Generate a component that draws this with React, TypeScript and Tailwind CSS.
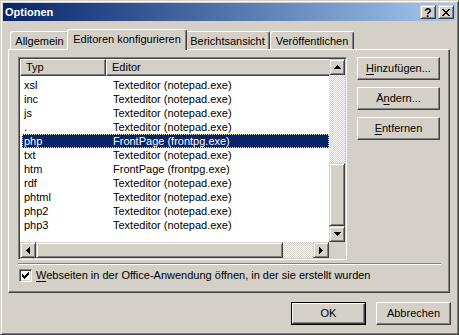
import React from "react";

function Px({ pts, color = "#000" }: { pts: string[]; color?: string }) {
  const rects: React.ReactElement[] = [];
  pts.forEach((row, y) =>
    row.split("").forEach((c, x) => {
      if (c === "#")
        rects.push(<rect key={`${x}-${y}`} x={x} y={y} width={1} height={1} fill={color} />);
    })
  );
  return (
    <svg width={pts[0].length} height={pts.length} shapeRendering="crispEdges" className="block">
      {rects}
    </svg>
  );
}

const UP = ["...#...", "..###..", ".#####.", "#######"];
const DOWN = ["#######", ".#####.", "..###..", "...#..."];
const LEFT = ["...#", "..##", ".###", "####", ".###", "..##", "...#"];
const RIGHT = ["#...", "##..", "###.", "####", "###.", "##..", "#..."];
const CLOSE = ["##....##", ".##..##.", "..####..", "...##...", "..####..", ".##..##.", "##....##"];
const CHECK = ["......#", ".....##", "#...###", "##.###.", "#####..", ".###...", "..#...."];

function ScrollBtn({ arrow }: { arrow: string[] }) {
  return (
    <div className="w-[16px] h-[16px] shrink-0 flex items-center justify-center bg-[#d4d0c8] border border-t-[#d4d0c8] border-l-[#d4d0c8] border-r-[#404040] border-b-[#404040] shadow-[inset_1px_1px_0_#fff,inset_-1px_-1px_0_#808080]">
      {arrow && <Px pts={arrow} />}
    </div>
  );
}

function Thumb({ className }: { className: string }) {
  return (
    <div
      className={
        "shrink-0 bg-[#d4d0c8] border border-t-[#d4d0c8] border-l-[#d4d0c8] border-r-[#404040] border-b-[#404040] shadow-[inset_1px_1px_0_#fff,inset_-1px_-1px_0_#808080] " +
        className
      }
    />
  );
}

function Track({ className }: { className: string }) {
  return (
    <div
      className={
        "shrink-0 bg-[repeating-conic-gradient(#d4d0c8_0%_25%,#ffffff_0%_50%)] bg-size-[2px_2px] " + className
      }
    />
  );
}

function Button({
  children,
  className = "",
  isDefault = false,
}: {
  children: React.ReactNode;
  className?: string;
  isDefault?: boolean;
}) {
  const inner = (
    <div className="w-full h-full flex items-center justify-center bg-[#d4d0c8] border border-t-white border-l-white border-r-[#404040] border-b-[#404040] shadow-[inset_-1px_-1px_0_#808080]">
      <span className="leading-none">{children}</span>
    </div>
  );
  if (isDefault) {
    return <div className={"border border-black " + className}>{inner}</div>;
  }
  return <div className={className}>{inner}</div>;
}

const TX = "Texteditor (notepad.exe)";
const FP = "FrontPage (frontpg.exe)";
const rows: [string, string][] = [
  ["xsl", TX],
  ["inc", TX],
  ["js", TX],
  [".", TX],
  ["php", FP],
  ["txt", TX],
  ["htm", FP],
  ["rdf", TX],
  ["phtml", TX],
  ["php2", TX],
  ["php3", TX],
];

function Tab({ label, w, selected = false }: { label: string; w: string; selected?: boolean }) {
  if (selected) {
    return (
      <div
        className={
          "relative z-10 -mx-[2px] -mb-[1px] h-[21px] flex justify-center pt-[4px] bg-[#d4d0c8] rounded-t-[3px] border-t border-l border-r border-t-white border-l-white border-r-[#404040] shadow-[inset_-1px_0_0_#808080] " +
          w
        }
      >
        <span className="leading-none">{label}</span>
      </div>
    );
  }
  return (
    <div
      className={
        "h-[18px] flex justify-center pt-[4px] bg-[#d4d0c8] rounded-t-[3px] border-t border-l border-r border-t-white border-l-white border-r-[#404040] shadow-[inset_-1px_0_0_#808080] " +
        w
      }
    >
      <span className="leading-none">{label}</span>
    </div>
  );
}

export default function App() {
  return (
    <div className="w-[459px] h-[335px] overflow-hidden bg-[#d4d0c8] text-black text-[11px] font-['Liberation_Sans',Arial,sans-serif] border border-t-[#d4d0c8] border-l-[#d4d0c8] border-r-[#404040] border-b-[#404040] shadow-[inset_1px_1px_0_#fff,inset_-1px_-1px_0_#808080] p-[2px] flex flex-col">
      {/* Title bar */}
      <div className="h-[18px] shrink-0 flex items-center pl-[2px] pr-[2px] bg-linear-to-r from-[#0a246a] to-[#a6caf0]">
        <span className="text-white font-bold leading-none">Optionen</span>
        <div className="ml-auto flex gap-[2px]">
          <div className="w-[16px] h-[14px] flex items-center justify-center bg-[#d4d0c8] border border-t-[#d4d0c8] border-l-[#d4d0c8] border-r-[#404040] border-b-[#404040] shadow-[inset_1px_1px_0_#fff,inset_-1px_-1px_0_#808080]">
            <span className="font-bold text-[12px] leading-none mt-[1px]">?</span>
          </div>
          <div className="w-[16px] h-[14px] flex items-center justify-center bg-[#d4d0c8] border border-t-[#d4d0c8] border-l-[#d4d0c8] border-r-[#404040] border-b-[#404040] shadow-[inset_1px_1px_0_#fff,inset_-1px_-1px_0_#808080]">
            <Px pts={CLOSE} />
          </div>
        </div>
      </div>

      {/* Tabs */}
      <div className="mt-[8px] h-[20px] pl-[7px] flex items-end">
        <Tab label="Allgemein" w="w-[59px]" />
        <Tab label="Editoren konfigurieren" w="w-[120px]" selected />
        <Tab label="Berichtsansicht" w="w-[85px]" />
        <Tab label="Veröffentlichen" w="w-[84px]" />
      </div>

      {/* Panel */}
      <div className="ml-[5px] w-[442px] h-[244px] shrink-0 border border-t-white border-l-white border-r-[#404040] border-b-[#404040] shadow-[inset_-1px_-1px_0_#808080] pl-[9px] pt-[7px] flex flex-col">
        <div className="flex">
          {/* List view */}
          <div className="w-[329px] h-[203px] shrink-0 border border-t-[#808080] border-l-[#808080] border-r-white border-b-white shadow-[inset_1px_1px_0_#404040,inset_-1px_-1px_0_#d4d0c8] p-[1px]">
            <div className="grid grid-cols-[309px_16px] grid-rows-[183px_16px]">
              <div className="bg-white overflow-hidden flex flex-col">
                <div className="h-[17px] shrink-0 flex">
                  <div className="w-[86px] shrink-0 flex items-center pl-[5px] bg-[#d4d0c8] border border-t-white border-l-white border-r-[#404040] border-b-[#404040] shadow-[inset_-1px_-1px_0_#808080]">
                    <span className="leading-none">Typ</span>
                  </div>
                  <div className="w-[240px] shrink-0 flex items-center pl-[5px] bg-[#d4d0c8] border border-t-white border-l-white border-r-[#404040] border-b-[#404040] shadow-[inset_-1px_-1px_0_#808080]">
                    <span className="leading-none">Editor</span>
                  </div>
                </div>
                <div className="pt-[2px] flex flex-col">
                  {rows.map(([t, e], i) => {
                    const sel = i === 4;
                    return (
                      <div
                        key={i}
                        className={
                          "h-[14px] ml-[2px] flex items-center " +
                          (sel
                            ? "bg-[#0a246a] text-white outline-1 outline-dotted outline-[#e8e2b0] -outline-offset-1"
                            : "")
                        }
                      >
                        <div className="w-[84px] shrink-0 pl-[2px] leading-none">{t}</div>
                        <div className="pl-[7px] leading-none whitespace-nowrap">{e}</div>
                      </div>
                    );
                  })}
                </div>
              </div>
              {/* vertical scrollbar */}
              <div className="flex flex-col">
                <ScrollBtn arrow={UP} />
                <Track className="h-[88px]" />
                <Thumb className="h-[63px]" />
                <ScrollBtn arrow={DOWN} />
              </div>
              {/* horizontal scrollbar */}
              <div className="flex">
                <ScrollBtn arrow={LEFT} />
                <Thumb className="w-[247px]" />
                <Track className="w-[30px]" />
                <ScrollBtn arrow={RIGHT} />
              </div>
              <div className="bg-[#d4d0c8]" />
            </div>
          </div>

          {/* Buttons */}
          <div className="ml-[10px] flex flex-col gap-[7px]">
            <Button className="w-[83px] h-[23px]">
              <span className="underline underline-offset-[2px]">H</span>inzufügen...
            </Button>
            <Button className="w-[83px] h-[23px]">
              Ä<span className="underline underline-offset-[2px]">n</span>dern...
            </Button>
            <Button className="w-[83px] h-[23px]">
              <span className="underline underline-offset-[2px]">E</span>ntfernen
            </Button>
          </div>
        </div>

        {/* separator */}
        <div className="mt-[3px] w-[423px] h-[2px] border-t border-t-[#808080] border-b border-b-white" />

        {/* checkbox */}
        <div className="mt-[4px] ml-[1px] flex items-center">
          <div className="w-[13px] h-[13px] shrink-0 bg-white border border-t-[#808080] border-l-[#808080] border-r-white border-b-white shadow-[inset_1px_1px_0_#404040,inset_-1px_-1px_0_#d4d0c8] flex items-center justify-center">
            <Px pts={CHECK} />
          </div>
          <span className="ml-[4px] leading-none">
            <span className="underline underline-offset-[2px]">W</span>ebseiten in der Office-Anwendung öffnen, in der sie
            erstellt wurden
          </span>
        </div>
      </div>

      {/* Bottom buttons */}
      <div className="mt-[9px] pr-[5px] flex justify-end gap-[10px]">
        <Button className="w-[75px] h-[23px]" isDefault>
          OK
        </Button>
        <Button className="w-[75px] h-[23px]">Abbrechen</Button>
      </div>
    </div>
  );
}
